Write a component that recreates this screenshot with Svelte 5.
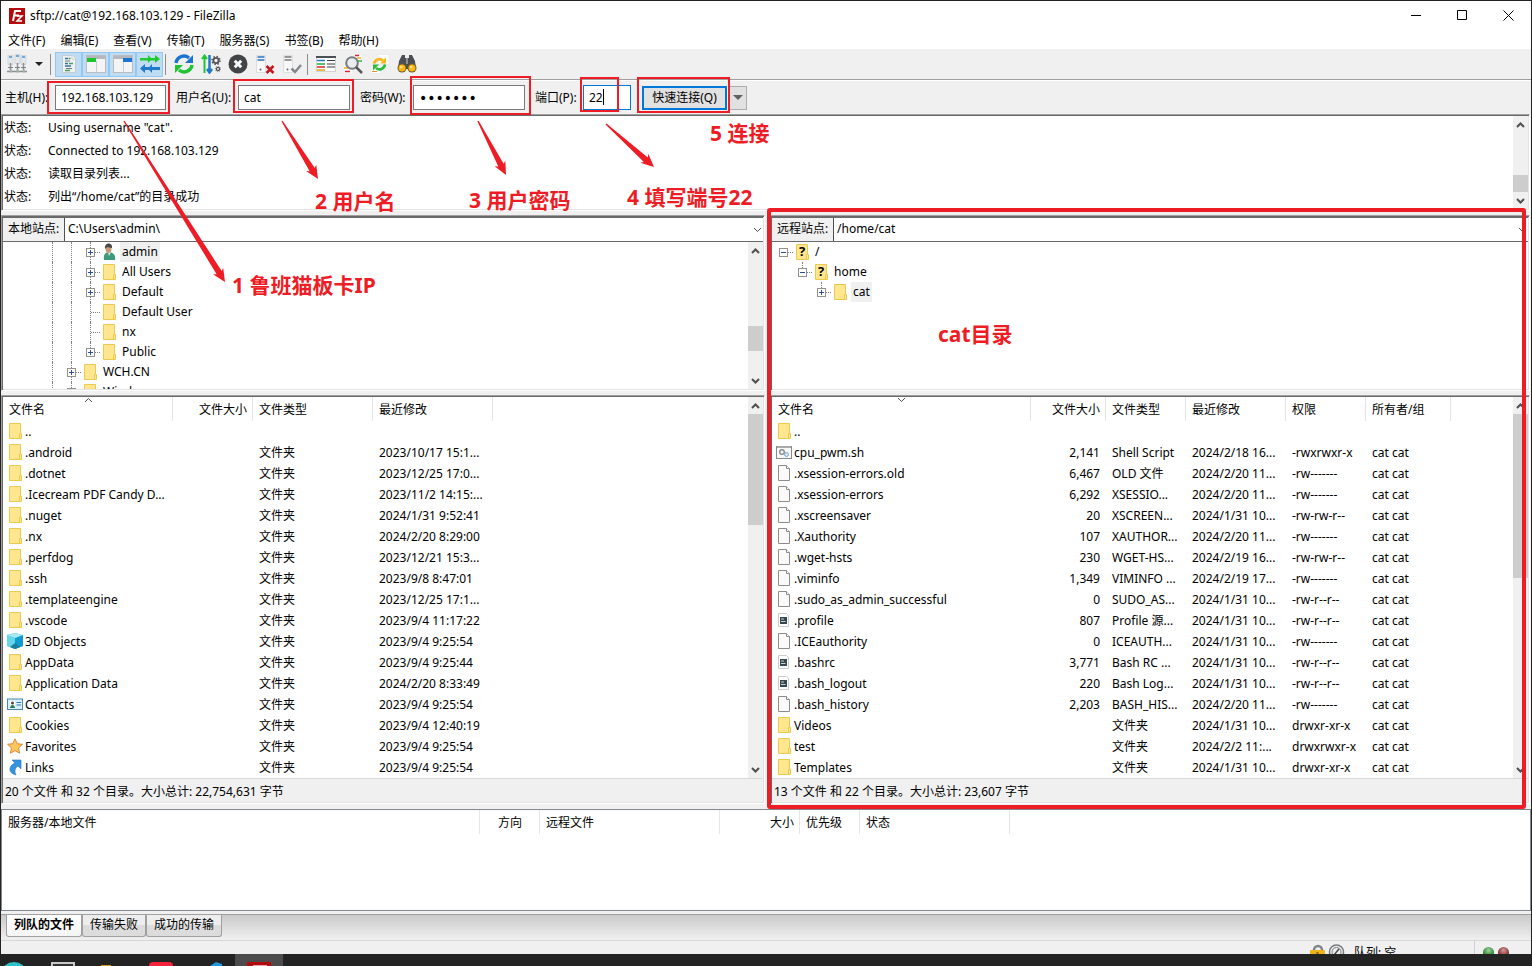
<script lang="ts">
	type Row = { icon: string; cells: string[] };

	const menus = ['文件(F)', '编辑(E)', '查看(V)', '传输(T)', '服务器(S)', '书签(B)', '帮助(H)'];

	const toggles = [
		{ icon: 'log', label: '消息日志' },
		{ icon: 'local', label: '本地目录树' },
		{ icon: 'remote', label: '远程目录树' },
		{ icon: 'queue', label: '传输队列' }
	];
	const actions = [
		{ icon: 'refresh', label: '刷新' },
		{ icon: 'process', label: '处理队列' },
		{ icon: 'cancel', label: '取消' },
		{ icon: 'disconnect', label: '断开连接' },
		{ icon: 'reconnect', label: '重新连接' }
	];
	const tools = [
		{ icon: 'filter', label: '过滤' },
		{ icon: 'compare', label: '比较' },
		{ icon: 'sync', label: '同步浏览' },
		{ icon: 'find', label: '搜索' }
	];

	const log = [
		'Using username "cat".',
		'Connected to 192.168.103.129',
		'读取目录列表...',
		'列出“/home/cat”的目录成功'
	];

	const localTree = [
		{ cells: ['', '', 'line', 'line', 'plus'], icon: 'user', name: 'admin', selected: true },
		{ cells: ['', '', 'line', 'line', 'plus'], icon: 'folder', name: 'All Users' },
		{ cells: ['', '', 'line', 'line', 'plus'], icon: 'folder', name: 'Default' },
		{ cells: ['', '', 'line', 'line', 'tee'], icon: 'folder', name: 'Default User' },
		{ cells: ['', '', 'line', 'line', 'tee'], icon: 'folder', name: 'nx' },
		{ cells: ['', '', 'line', 'line', 'plus last'], icon: 'folder', name: 'Public' },
		{ cells: ['', '', 'line', 'plus'], icon: 'folder', name: 'WCH.CN' },
		{ cells: ['', '', 'line', 'plus'], icon: 'folder', name: 'Windows' }
	];
	const remoteTree = [
		{ cells: ['minus root'], icon: 'unknown', name: '/' },
		{ cells: ['', 'minus last'], icon: 'unknown', name: 'home' },
		{ cells: ['', '', 'plus last'], icon: 'folder', name: 'cat', selected: true }
	];

	const dir = (name: string, date: string, icon = 'folder'): Row => ({
		icon,
		cells: [name, '', '文件夹', date]
	});
	const remote = (icon: string, name: string, size: string, type: string, date: string, perm: string): Row => ({
		icon,
		cells: [name, size, type, date, perm, 'cat cat']
	});

	const localCols = [
		{ name: '文件名', width: 170, sort: 'up' },
		{ name: '文件大小', width: 80, right: true },
		{ name: '文件类型', width: 120 },
		{ name: '最近修改', width: 120 }
	];
	const localRows = [
		{ icon: 'folder', cells: ['..', '', '', ''] },
		dir('.android', '2023/10/17 15:1...'),
		dir('.dotnet', '2023/12/25 17:0...'),
		dir('.Icecream PDF Candy D...', '2023/11/2 14:15:...'),
		dir('.nuget', '2024/1/31 9:52:41'),
		dir('.nx', '2024/2/20 8:29:00'),
		dir('.perfdog', '2023/12/21 15:3...'),
		dir('.ssh', '2023/9/8 8:47:01'),
		dir('.templateengine', '2023/12/25 17:1...'),
		dir('.vscode', '2023/9/4 11:17:22'),
		dir('3D Objects', '2023/9/4 9:25:54', 'cube'),
		dir('AppData', '2023/9/4 9:25:44'),
		dir('Application Data', '2024/2/20 8:33:49'),
		dir('Contacts', '2023/9/4 9:25:54', 'contact'),
		dir('Cookies', '2023/9/4 12:40:19'),
		dir('Favorites', '2023/9/4 9:25:54', 'star'),
		dir('Links', '2023/9/4 9:25:54', 'link')
	];

	const remoteCols = [
		{ name: '文件名', width: 259, sort: 'down' },
		{ name: '文件大小', width: 75, right: true },
		{ name: '文件类型', width: 80 },
		{ name: '最近修改', width: 100 },
		{ name: '权限', width: 80 },
		{ name: '所有者/组', width: 85 }
	];
	const remoteRows = [
		{ icon: 'folder', cells: ['..', '', '', '', '', ''] },
		remote('script', 'cpu_pwm.sh', '2,141', 'Shell Script', '2024/2/18 16...', '-rwxrwxr-x'),
		remote('file', '.xsession-errors.old', '6,467', 'OLD 文件', '2024/2/20 11...', '-rw-------'),
		remote('file', '.xsession-errors', '6,292', 'XSESSIO...', '2024/2/20 11...', '-rw-------'),
		remote('file', '.xscreensaver', '20', 'XSCREEN...', '2024/1/31 10...', '-rw-rw-r--'),
		remote('file', '.Xauthority', '107', 'XAUTHOR...', '2024/2/20 11...', '-rw-------'),
		remote('file', '.wget-hsts', '230', 'WGET-HS...', '2024/2/19 16...', '-rw-rw-r--'),
		remote('file', '.viminfo', '1,349', 'VIMINFO ...', '2024/2/19 17...', '-rw-------'),
		remote('file', '.sudo_as_admin_successful', '0', 'SUDO_AS...', '2024/1/31 10...', '-rw-r--r--'),
		remote('source', '.profile', '807', 'Profile 源...', '2024/1/31 10...', '-rw-r--r--'),
		remote('file', '.ICEauthority', '0', 'ICEAUTH...', '2024/1/31 10...', '-rw-------'),
		remote('source', '.bashrc', '3,771', 'Bash RC ...', '2024/1/31 10...', '-rw-r--r--'),
		remote('source', '.bash_logout', '220', 'Bash Log...', '2024/1/31 10...', '-rw-r--r--'),
		remote('file', '.bash_history', '2,203', 'BASH_HIS...', '2024/2/20 11...', '-rw-------'),
		remote('folder', 'Videos', '', '文件夹', '2024/1/31 10...', 'drwxr-xr-x'),
		remote('folder', 'test', '', '文件夹', '2024/2/2 11:...', 'drwxrwxr-x'),
		remote('folder', 'Templates', '', '文件夹', '2024/1/31 10...', 'drwxr-xr-x')
	];

	const queueCols = [
		{ name: '服务器/本地文件', width: 478 },
		{ name: '方向', width: 60, center: true },
		{ name: '远程文件', width: 180 },
		{ name: '大小', width: 80, right: true },
		{ name: '优先级', width: 60 },
		{ name: '状态', width: 150 }
	];

	const tabs = ['列队的文件', '传输失败', '成功的传输'];
	let activeTab = $state(0);

	let host = $state('192.168.103.129');
	let user = $state('cat');
	let password = $state('1234567');
	let port = $state('22');

	const boxes = [
		[48, 82, 121, 31],
		[234, 80, 119, 32],
		[411, 77, 119, 37],
		[581, 78, 37, 33],
		[638, 78, 91, 34]
	];
	const arrows = [
		[124, 121, 225, 282],
		[282, 121, 318, 179],
		[478, 121, 506, 175],
		[606, 124, 654, 167]
	];
	const notes = [
		{ x: 232, y: 293, text: '1 鲁班猫板卡IP' },
		{ x: 315, y: 209, text: '2 用户名' },
		{ x: 469, y: 208, text: '3 用户密码' },
		{ x: 627, y: 205, text: '4 填写端号22' },
		{ x: 710, y: 141, text: '5 连接' },
		{ x: 938, y: 342, text: 'cat目录' }
	];

	// thin tail that widens towards a barbed head
	function arrowPoints([x1, y1, x2, y2]: number[]) {
		const len = Math.hypot(x2 - x1, y2 - y1);
		const ux = (x2 - x1) / len;
		const uy = (y2 - y1) / len;
		const at = (along: number, side: number) =>
			`${x1 + ux * along - uy * side},${y1 + uy * along + ux * side}`;
		return [
			at(0, -0.7),
			at(len - 11, -3),
			at(len - 13, -6),
			at(len, 0),
			at(len - 13, 6),
			at(len - 11, 3),
			at(0, 0.7)
		].join(' ');
	}
</script>

{#snippet toolIcon(name: string)}
	<svg class="tool-icon" viewBox="0 0 20 20" aria-hidden="true">
		{#if name === 'site'}
			<path d="M1 1.500h5v9H1zM8 .5h5v9H8zM14 1.500h5v9h-5z" fill="#e4e8ec" stroke="#c3c9cf" stroke-width=".6" />
			<path d="M2 2h3v2H2zM9 1h3v2H9zM15 2h3v2h-3z" fill="#6ea9e0" />
			<path d="M3.500 9v8M10.500 9v8M16.500 9v8M0 17.500h20" stroke="#8b9196" stroke-width="1.500" />
			<path d="M1 13.500h5M8 13.500h5M14 13.500h5" stroke="#7c8389" />
			<path d="M3 15.500h2v3H3zM9.500 15.500h2v3h-2zM16 15.500h2v3h-2z" fill="#9db59a" />
		{:else if name === 'log'}
			<path d="M3.500 1.500h10l3 3v14h-13z" fill="#eef1f4" stroke="#c5cdd4" />
			<path d="M13 1.500v3.500h3.500" fill="#fff" stroke="#c5cdd4" />
			<path d="M6 4.500h3M6 9.500h3M6 12h6" stroke="#3d6f9e" stroke-width="1.500" />
			<path d="M9.500 4.500h2M10 9.500h4M6 16.500h5" stroke="#49a05b" stroke-width="1.500" />
			<path d="M6 7h5M7 14.500h6" stroke="#707980" />
		{:else if name === 'local' || name === 'remote'}
			<rect x=".5" y="1.500" width="19" height="17" fill="#f4f4f4" stroke="#b9bdc1" />
			<rect x="1" y="2" width="18" height="3" fill="#b4b8bc" />
			<path d="M10.500 7v11" stroke="#c9cdd0" />
			{#if name === 'local'}
				<path d="M1 4h9v4H1z" fill="#1cc52b" />
			{:else}
				<path d="M10 4h9v4h-9z" fill="#1d74d0" />
			{/if}
		{:else if name === 'queue'}
			<path d="M0 4h8V1l4 4-4 4V6.500H0zM10 4h5V1l5 4-5 4V6.500h-5z" fill="#1fc92f" />
			<path d="M20 13h-8v-3l-4 4.500 4 4.500v-3h8zM9 13H5v-3l-5 4.500L5 19v-3h4z" fill="#2279cc" />
		{:else if name === 'refresh'}
			<path d="M2 9A8 8 0 0 1 15 4" fill="none" stroke="#1d74d0" stroke-width="3.500" />
			<path d="M19 1v8h-8z" fill="#1d74d0" />
			<path d="M18 11A8 8 0 0 1 5 16" fill="none" stroke="#1fc333" stroke-width="3.500" />
			<path d="M1 19v-8h8z" fill="#1fc333" />
		{:else if name === 'process'}
			<path d="M3.500 2v17M1 5l2.500-3.500L6 5" fill="none" stroke="#20c534" stroke-width="2" />
			<path d="M8.500 1v17M6 15l2.500 3.500L11 15" fill="none" stroke="#2279cc" stroke-width="2.500" />
			<circle cx="15" cy="6.500" r="2.600" fill="none" stroke="#555" stroke-width="1.800" />
			<circle cx="15" cy="6.500" r="4" fill="none" stroke="#555" stroke-dasharray="1.500 1.640" stroke-width="1.500" />
			<circle cx="17" cy="15" r="1.600" fill="none" stroke="#555" stroke-width="1.300" />
			<circle cx="17" cy="15" r="2.700" fill="none" stroke="#777" stroke-dasharray="1 1.120" />
		{:else if name === 'cancel'}
			<circle cx="10" cy="10" r="9.500" fill="#424548" />
			<path d="M6.800 6.800l6.400 6.400M13.200 6.800l-6.400 6.400" stroke="#fff" stroke-width="3" />
		{:else if name === 'disconnect' || name === 'reconnect'}
			<path d="M1.500 1.500h9v17h-9z" fill="#f8f8f8" stroke="#dcdfe2" />
			<path d="M2.500 3h7M2.500 6h7" stroke={name === 'disconnect' ? '#2b72b8' : '#777'} stroke-width="1.500" />
			<circle cx="5.500" cy="15.500" r="1" fill="#666" />
			{#if name === 'disconnect'}
				<path d="M11.500 12l7 7M18.500 12l-7 7" stroke="#c4161f" stroke-width="2.500" />
			{:else}
				<path d="M9.500 14.500l3.500 3.500 6-7" fill="none" stroke="#85888a" stroke-width="2.500" />
			{/if}
		{:else if name === 'filter'}
			<rect x=".5" y="2.500" width="19" height="15" fill="#fff" stroke="#d2d2d2" />
			<path d="M0 3h20" stroke="#4b5054" stroke-width="2" />
			<path d="M1 6.500h8" stroke="#2279cc" stroke-width="1.500" />
			<path d="M1 10h8" stroke="#22ad38" stroke-width="1.500" />
			<path d="M1 13h8" stroke="#d9252b" stroke-width="1.500" />
			<path d="M1 16h8" stroke="#e0a512" stroke-width="1.500" />
			<path d="M11 6.500h8M11 10h8M11 13h8" stroke="#3b3e41" />
		{:else if name === 'compare'}
			<path d="M11 1h7v7h-7zM1 11h8v8H1z" fill="#fff" />
			<path d="M12 1.500h4M2 17.500h5" stroke="#d9252b" stroke-width="1.500" />
			<path d="M14 4h4M1 14h4" stroke="#f0ae20" stroke-width="1.500" />
			<path d="M15 7h4" stroke="#27b543" stroke-width="1.500" />
			<circle cx="9" cy="9" r="5.800" fill="#e8edf0" stroke="#777b7e" stroke-width="2" />
			<path d="M13 13l6 6" stroke="#56595c" stroke-width="2.500" />
		{:else if name === 'sync'}
			<path d="M8 .5h11v10H8zM.5 12h10v7.500H.5z" fill="#fff" stroke="#e2e2e2" stroke-width=".6" />
			<path d="M4 9.500a5.500 5.500 0 0 1 9-3" fill="none" stroke="#f6b613" stroke-width="2.600" />
			<path d="M16 3.500v6h-6z" fill="#f6b613" />
			<path d="M15 10.500a5.500 5.500 0 0 1-9 3.500" fill="none" stroke="#2cbc3c" stroke-width="2.600" />
			<path d="M3 16.500v-6h6z" fill="#2cbc3c" />
			<path d="M2 17.500h5" stroke="#e39a1e" />
		{:else}
			<path d="M5 1h3v3h4V1h3l3 6 1 8H1l1-8z" fill="#4b4f53" />
			<path d="M9 4h2v6H9z" fill="#8c9093" />
			<circle cx="5" cy="14" r="4.500" fill="#6a5a2a" />
			<circle cx="15" cy="14" r="4.500" fill="#6a5a2a" />
			<circle cx="5" cy="14" r="3.500" fill="#fbb613" />
			<circle cx="15" cy="14" r="3.500" fill="#fbb613" />
			<circle cx="4.300" cy="13" r="1.300" fill="#ffe38a" />
			<circle cx="14.300" cy="13" r="1.300" fill="#ffe38a" />
		{/if}
	</svg>
{/snippet}

{#snippet fileIcon(name: string)}
	<svg class="file-icon" viewBox="0 0 16 16" aria-hidden="true">
		{#if name === 'folder' || name === 'unknown'}
			<path d="M2.500.5h11v10h1v5h-12z" fill="#ffe68f" stroke="#ecc94f" />
			<path d="M12.500 15V10.500h1" fill="none" stroke="#ecc94f" />
			{#if name === 'unknown'}
				<text x="8" y="12" text-anchor="middle" font-size="13" font-weight="700">?</text>
			{/if}
		{:else if name === 'file'}
			<path d="M2.500.5h8l3 3v12h-11z" fill="#fafafa" stroke="#8c8c8c" />
			<path d="M10.500.5v3h3" fill="#fff" stroke="#8c8c8c" />
		{:else if name === 'source'}
			<path d="M2.500 1.500h8l2 2v11h-10z" fill="#fff" stroke="#c9cdd0" />
			<rect x="4" y="5" width="7" height="7" fill="#36474f" />
			<path d="M5 7h3M5 9.500h4.500" stroke="#c9d2d6" />
		{:else if name === 'script'}
			<rect x=".5" y="2.500" width="15" height="12" fill="#f8f8f8" stroke="#85898c" />
			<path d="M1 3h14" stroke="#a7abae" stroke-width="2" />
			<circle cx="6" cy="8" r="2.300" fill="none" stroke="#8a8f93" stroke-width="1.500" />
			<circle cx="10.500" cy="10.500" r="2" fill="#cfe4f5" stroke="#7fa9c9" />
		{:else if name === 'cube'}
			<path d="M8 0l8 2v11l-8 3-8-3V2z" fill="#35bcd8" />
			<path d="M0 2l8 3v11l-8-3z" fill="#63d5e8" />
			<path d="M8 5l8-3v11l-8 3z" fill="#0f9bd0" />
			<path d="M0 2l8-2 8 2-8 3z" fill="#a5e9f3" />
			<path d="M3 14l5-4 5 4-5 2z" fill="#1a7f9c" />
		{:else if name === 'contact'}
			<rect x=".5" y="3" width="15" height="10.500" fill="#d9effb" stroke="#4a86ad" />
			<path d="M3 5h5v7H3z" fill="#fff" />
			<circle cx="5.500" cy="7" r="1.500" fill="#584334" />
			<path d="M3 12c0-4 5-4 5 0z" fill="#2e7c63" />
			<path d="M9.500 6.500h4.500M9.500 9h4.500" stroke="#3179b5" />
		{:else if name === 'star'}
			<path
				d="M8 .8l2.200 4.900 5.300.6-3.900 3.600 1 5.300L8 12.600l-4.600 2.600 1-5.300L.5 6.300l5.300-.6z"
				fill="#fdc65b"
				stroke="#e08a3c"
			/>
		{:else if name === 'link'}
			<path d="M5 1h9v9l-3-3c-3 2-4 5-2 9-8-2-8-9-1-12z" fill="#3593e0" stroke="#2774bd" stroke-width=".6" />
		{:else}
			<path d="M3 16c-1-6 2-8 5-8s7 2 6 8z" fill="#3d9b7b" />
			<path d="M7 8l1 4 2-4z" fill="#e8f1ee" />
			<ellipse cx="7.500" cy="5" rx="3" ry="4" fill="#c49a7a" />
			<path d="M4 5c-1-7 8-7 7-1-2 0-4-1-5-1z" fill="#4d4a47" />
		{/if}
	</svg>
{/snippet}

{#snippet chevron(dir: string)}
	<svg class="chevron" viewBox="0 0 9 6" aria-hidden="true">
		<path d={dir === 'up' ? 'M1 5l3.500-3.500L8 5' : 'M1 1l3.500 3.500L8 1'} />
	</svg>
{/snippet}

{#snippet scrollbar(before: number, thumb: number, after: number)}
	<div class="scrollbar">
		<button aria-label="向上滚动">{@render chevron('up')}</button>
		<div style="flex-grow: {before}"></div>
		<div class="thumb" style="flex-grow: {thumb}"></div>
		<div style="flex-grow: {after}"></div>
		<button aria-label="向下滚动">{@render chevron('down')}</button>
	</div>
{/snippet}

{#snippet headings(cols: any[])}
	<thead>
		<tr>
			{#each cols as col}
				<th class:right={col.right} class:center={col.center} style="width: {col.width}px">
					{col.name}
					{#if col.sort}<span class="sort">{@render chevron(col.sort)}</span>{/if}
				</th>
			{/each}
			<th class="rest" aria-hidden="true"></th>
		</tr>
	</thead>
{/snippet}

{#snippet site(id: string, label: string, path: string, tree: any[], bar: number[] | null, cols: any[], rows: Row[], listBar: number[], total: string)}
	<section class="site">
		<div class="sunken top">
			<div class="path">
				<label for={id}>{label}</label>
				<select {id}>
					<option>{path}</option>
				</select>
				{@render chevron('down')}
			</div>
			<div class="scroll-area">
				<ul class="tree">
					{#each tree as node}
						<li>
							{#each node.cells as cell}
								<span class="cell {cell}">
									{#if cell.startsWith('plus') || cell.startsWith('minus')}
										<svg viewBox="0 0 9 9" aria-hidden="true">
											<rect x=".5" y=".5" width="8" height="8" />
											<path d={cell.startsWith('plus') ? 'M2 4.500h5M4.500 2v5' : 'M2 4.500h5'} />
										</svg>
									{/if}
								</span>
							{/each}
							<span class="node-icon">{@render fileIcon(node.icon)}</span>
							<span class="node-name" class:selected={node.selected}>{node.name}</span>
						</li>
					{/each}
				</ul>
				{#if bar}{@render scrollbar(bar[0], bar[1], bar[2])}{/if}
			</div>
		</div>
		<div class="sunken list">
			<div class="scroll-area">
				<div class="files">
					<table>
						{@render headings(cols)}
						<tbody>
							{#each rows as row}
								<tr>
									{#each row.cells as cell, i}
										{#if i === 0}
											<td class="name"><span>{@render fileIcon(row.icon)}{cell}</span></td>
										{:else}
											<td class:right={cols[i].right}>{cell}</td>
										{/if}
									{/each}
									<td></td>
								</tr>
							{/each}
						</tbody>
					</table>
				</div>
				{@render scrollbar(listBar[0], listBar[1], listBar[2])}
			</div>
			<p class="total">{total}</p>
		</div>
	</section>
{/snippet}

<div class="desktop">
	<main class="window">
		<header class="titlebar">
			<svg class="logo" viewBox="0 0 16 16" aria-hidden="true">
				<rect width="16" height="16" fill="#b30b0b" />
				<path d="M4 13L6 3h6M5 7.500h5" fill="none" stroke="#fff" stroke-width="2" />
				<path d="M8 8h5l-5 5h5" fill="none" stroke="#fff" stroke-width="1.500" />
			</svg>
			<h1>sftp://cat@192.168.103.129 - FileZilla</h1>
			<div class="controls">
				<button aria-label="最小化"><svg viewBox="0 0 11 11"><path d="M0 5.500h10" /></svg></button>
				<button aria-label="最大化"><svg viewBox="0 0 11 11"><path d="M.5.5h9v9h-9z" /></svg></button>
				<button aria-label="关闭"><svg viewBox="0 0 11 11"><path d="M.5.5l10 10M10.500.5l-10 10" /></svg></button>
			</div>
		</header>

		<nav class="menubar">
			{#each menus as menu}
				<button>{menu}</button>
			{/each}
		</nav>

		<div class="toolbar">
			<button aria-label="站点管理器">{@render toolIcon('site')}</button>
			<button class="more" aria-label="站点列表"><i class="triangle"></i></button>
			<hr />
			{#each toggles as item}
				<button class="pressed" aria-pressed="true" aria-label={item.label}>{@render toolIcon(item.icon)}</button>
			{/each}
			<hr />
			{#each actions as item}
				<button aria-label={item.label}>{@render toolIcon(item.icon)}</button>
			{/each}
			<hr />
			{#each tools as item}
				<button aria-label={item.label}>{@render toolIcon(item.icon)}</button>
			{/each}
		</div>

		<form class="quickconnect" onsubmit={(e) => e.preventDefault()}>
			<label for="host">主机(H):</label>
			<input id="host" type="text" bind:value={host} />
			<label for="user">用户名(U):</label>
			<input id="user" type="text" bind:value={user} />
			<label for="password">密码(W):</label>
			<input id="password" type="password" bind:value={password} />
			<label for="port">端口(P):</label>
			<span class="port">
				<input id="port" type="text" bind:value={port} />
				<i class="caret"></i>
			</span>
			<button class="connect">快速连接(Q)</button>
			<button type="button" class="history" aria-label="历史记录"><i class="triangle"></i></button>
		</form>

		<div class="sunken log">
			<div class="scroll-area">
				<dl>
					{#each log as line}
						<div>
							<dt>状态:</dt>
							<dd>{line}</dd>
						</div>
					{/each}
				</dl>
				{@render scrollbar(42, 17, 0)}
			</div>
		</div>

		<div class="sites">
			{@render site('local-path', '本地站点:', 'C:\\Users\\admin\\', localTree, [67, 25, 21], localCols, localRows, [0, 111, 236], '20 个文件 和 32 个目录。大小总计: 22,754,631 字节')}
			{@render site('remote-path', '远程站点:', '/home/cat', remoteTree, null, remoteCols, remoteRows, [0, 164, 183], '13 个文件 和 22 个目录。大小总计: 23,607 字节')}
		</div>

		<div class="transfers">
			<table>
				{@render headings(queueCols)}
			</table>
		</div>

		<div class="tabs" role="tablist">
			{#each tabs as tab, i}
				<button role="tab" aria-selected={activeTab === i} class:active={activeTab === i} onclick={() => (activeTab = i)}>
					{tab}
				</button>
			{/each}
		</div>

		<footer class="statusbar">
			<svg class="status-icons" viewBox="0 0 36 18" aria-hidden="true">
				<path d="M4 8V6a4 4 0 0 1 8 0v2" fill="none" stroke="#808488" stroke-width="2.500" />
				<rect x="0" y="6" width="15" height="11" rx="1" fill="#efb21b" />
				<rect x="6.500" y="8" width="2" height="5" fill="#8b6510" />
				<circle cx="26.500" cy="8" r="7" fill="#eee" stroke="#777a7d" stroke-width="1.500" />
				<circle cx="26.500" cy="8" r="4.500" fill="none" stroke="#777a7d" />
				<path d="M24 11l5-6" stroke="#44474a" stroke-width="1.500" />
			</svg>
			<span class="queue-state">队列: 空</span>
			<span class="leds"><i class="led green"></i><i class="led red"></i></span>
		</footer>
	</main>

	<svg class="taskbar" viewBox="1 0 300 12" width="300" height="12" aria-hidden="true">
		<rect x="235" width="48" height="12" fill="#4c4c4c" />
		<ellipse cx="14" cy="18" rx="12" ry="10" fill="#2fc3c9" />
		<rect x="52" y="9" width="22" height="10" fill="#333" stroke="#c8c8c8" stroke-width="2" />
		<rect x="101" y="11" width="10" height="3" fill="#d59d20" />
		<rect x="149" y="8" width="24" height="10" rx="4" fill="#f5213b" />
		<path d="M210 12l6-4 6 2v2z" fill="#2196dc" />
		<rect x="247" y="8" width="24" height="6" fill="#b30b0b" />
		<path d="M253 11.500h14" stroke="#e9a5a5" />
	</svg>

	<svg class="annotations" aria-hidden="true">
		{#each boxes as [x, y, width, height]}
			<rect {x} {y} {width} {height} stroke-width="2" />
		{/each}
		<rect x="769" y="210" width="755" height="597" rx="1" stroke-width="4" />
		{#each arrows as arrow}
			<polygon points={arrowPoints(arrow)} />
		{/each}
		{#each notes as note}
			<text x={note.x} y={note.y}>{note.text}</text>
		{/each}
	</svg>
</div>

<style>
	:global(body) {
		background: #232323;
	}

	.desktop {
		position: relative;
		display: flex;
		flex-direction: column;
		height: 100vh;
		box-sizing: border-box;
		padding: 1px 1px 0;
		overflow: hidden;
		background: #232323;
		color: #000;
		font: 12px/20px 'Noto Sans', 'Noto Sans CJK SC', sans-serif;
	}

	.window {
		flex: 1;
		min-height: 0;
		display: flex;
		flex-direction: column;
		background: #f0f0f0;
	}

	button,
	input,
	select {
		box-sizing: border-box;
		margin: 0;
		padding: 0;
		border: 0;
		border-radius: 0;
		background: none;
		color: inherit;
		font: inherit;
	}

	svg {
		display: block;
		flex: none;
	}

	.titlebar {
		display: flex;
		align-items: center;
		height: 29px;
		padding-left: 8px;
		background: #fff;
	}

	.logo {
		width: 16px;
		height: 16px;
		margin-right: 5px;
	}

	h1 {
		flex: 1;
		margin: 0;
		font-size: 12px;
		font-weight: 400;
	}

	.controls {
		display: flex;
	}

	.controls button {
		display: flex;
		align-items: center;
		justify-content: center;
		width: 46px;
		height: 29px;
	}

	.controls svg {
		width: 11px;
		height: 11px;
		fill: none;
		stroke: #000;
	}

	.menubar {
		display: flex;
		gap: 15px;
		height: 19px;
		padding-left: 7px;
		background: #fff;
	}

	.menubar button {
		line-height: 22px;
		white-space: nowrap;
	}

	.toolbar {
		display: flex;
		align-items: center;
		height: 30px;
		padding-left: 2px;
		border-bottom: 1px solid #a0a0a0;
	}

	.toolbar button {
		display: flex;
		align-items: center;
		justify-content: center;
		width: 27px;
		height: 25px;
	}

	.toolbar .more {
		width: 18px;
	}

	.toolbar .pressed {
		border: 1px solid #90c8f6;
		background: #c0dcf3;
	}

	.toolbar hr {
		width: 1px;
		height: 21px;
		margin: 0 4px 0 2px;
		border: 0;
		background: #8c8c8c;
	}

	.tool-icon {
		width: 20px;
		height: 20px;
	}

	.triangle {
		border: 4px solid transparent;
		border-top-color: #222;
		border-bottom: 0;
	}

	.quickconnect {
		display: grid;
		grid-template-columns: 50px 111px 72px 112px 63px 112px 58px 48px 98px 18px;
		align-items: center;
		height: 33px;
		padding-left: 4px;
		border-top: 1px solid #fff;
	}

	.quickconnect label {
		padding-left: 10px;
		white-space: nowrap;
	}

	.quickconnect label:first-child {
		padding-left: 0;
	}

	.quickconnect input {
		display: block;
		width: 100%;
		height: 25px;
		padding: 0 5px;
		border: 1px solid #7a7a7a;
		background: #fff;
		outline: 0;
	}

	.quickconnect input[type='password'] {
		font: 14px/20px 'DejaVu Sans', sans-serif;
	}

	.port {
		position: relative;
	}

	.quickconnect .port input {
		border-color: #0078d7;
	}

	.caret {
		position: absolute;
		left: 20px;
		top: 4px;
		width: 1px;
		height: 16px;
		background: #000;
	}

	.quickconnect .connect {
		height: 24px;
		margin: 0 2px 0 11px;
		border: 2px solid #0078d7;
		background: #e1e1e1;
		white-space: nowrap;
	}

	.quickconnect .history {
		display: flex;
		align-items: center;
		justify-content: center;
		height: 24px;
		border: 1px solid #adadad;
		background: #e1e1e1;
	}

	.history .triangle {
		border-width: 5px 5px 0;
		border-top-color: #606060;
	}

	.sunken {
		display: flex;
		flex-direction: column;
		border: 1px solid #fff;
		border-top-color: #a0a0a0;
		border-left-color: #a0a0a0;
		background: #fff;
		box-shadow: inset 1px 1px #696969, inset -1px -1px #e3e3e3;
		box-sizing: border-box;
		padding: 1px;
	}

	.scroll-area {
		flex: 1;
		display: flex;
		min-height: 0;
	}

	.log {
		height: 97px;
		margin-right: 1px;
	}

	dl {
		flex: 1;
		margin: 0;
		padding-left: 1px;
	}

	dl div {
		display: flex;
		line-height: 23px;
	}

	dt {
		width: 44px;
	}

	dd {
		margin: 0;
	}

	.scrollbar {
		display: flex;
		flex-direction: column;
		width: 15px;
		background: #f0f0f0;
	}

	.scrollbar button {
		display: flex;
		align-items: center;
		justify-content: center;
		height: 17px;
	}

	.scrollbar div {
		flex-basis: 0;
	}

	.thumb {
		background: #cdcdcd;
	}

	.chevron {
		width: 9px;
		height: 6px;
		fill: none;
		stroke: #505050;
	}

	.scrollbar .chevron {
		stroke-width: 2;
	}

	.sites {
		flex: 1;
		min-height: 0;
		display: grid;
		grid-template-columns: 764fr 760fr;
		gap: 5px;
		margin: 4px 1px 5px 0;
	}

	.site {
		display: flex;
		flex-direction: column;
		gap: 4px;
		min-width: 0;
		min-height: 0;
	}

	.top {
		height: 176px;
	}

	.path {
		position: relative;
		display: flex;
		height: 25px;
		box-sizing: border-box;
		border-top: 1px solid #696969;
		border-bottom: 1px solid #696969;
	}

	.path label {
		width: 62px;
		box-sizing: border-box;
		padding-left: 5px;
		border-right: 1px solid #505050;
		background: #f0f0f0;
		line-height: 22px;
		white-space: nowrap;
	}

	.path select {
		flex: 1;
		padding: 0 0 1px 3px;
		appearance: none;
		background: #fff;
	}

	.path .chevron {
		position: absolute;
		right: 1px;
		top: 9px;
	}

	.tree {
		flex: 1;
		margin: 0;
		padding: 0 0 0 2px;
		list-style: none;
		overflow: hidden;
	}

	.tree li {
		display: flex;
		height: 20px;
	}

	.cell {
		position: relative;
		width: 19px;
	}

	.cell.line::before,
	.cell.tee::before,
	.cell.plus::before,
	.cell.last::before {
		content: '';
		position: absolute;
		left: 9px;
		top: 0;
		bottom: 0;
		border-left: 1px dotted #808080;
	}

	.cell.last::before {
		bottom: 10px;
	}

	.cell.tee::after,
	.cell.plus::after,
	.cell.minus::after {
		content: '';
		position: absolute;
		left: 10px;
		right: 0;
		top: 10px;
		border-top: 1px dotted #808080;
	}

	.cell svg {
		position: absolute;
		z-index: 1;
		left: 5px;
		top: 6px;
		width: 9px;
		height: 9px;
		fill: #fff;
		stroke: #919191;
	}

	.cell path {
		stroke: #2b4fa0;
	}

	.node-icon {
		width: 19px;
		padding: 2px 0 0 1px;
		box-sizing: border-box;
	}

	.node-name {
		margin-left: 1px;
		padding: 0 2px;
	}

	.selected {
		background: #f0f0f0;
	}

	.file-icon {
		width: 16px;
		height: 16px;
		overflow: visible;
	}

	.list {
		flex: 1;
		min-height: 0;
	}

	.files {
		flex: 1;
		min-width: 0;
		overflow: hidden;
	}

	table {
		width: 100%;
		table-layout: fixed;
		border-collapse: collapse;
	}

	th,
	td {
		height: 21px;
		padding: 0 6px;
		box-sizing: border-box;
		font-weight: 400;
		line-height: 21px;
		text-align: left;
		white-space: nowrap;
		overflow: visible;
	}

	th {
		position: relative;
		height: 24px;
		background: linear-gradient(#e5e5e5, #e5e5e5) right / 1px 100% no-repeat;
	}

	th.rest {
		background: none;
	}

	.right {
		text-align: right;
	}

	.center {
		text-align: center;
	}

	.sort {
		position: absolute;
		left: 0;
		right: 0;
		top: 0;
		display: flex;
		justify-content: center;
	}

	td.name {
		padding: 0 0 0 4px;
	}

	.name span {
		display: flex;
		align-items: center;
		gap: 2px;
	}

	.name .file-icon {
		margin-bottom: 1px;
	}

	.total {
		height: 23px;
		margin: 0;
		padding-left: 2px;
		border-top: 1px solid #d9d9d9;
		background: #f0f0f0;
		line-height: 25px;
	}

	.transfers {
		height: 102px;
		box-sizing: border-box;
		border: 1px solid #828790;
		background: #fff;
	}

	.tabs {
		display: flex;
		align-items: flex-start;
		height: 26px;
		margin-top: 3px;
		padding-left: 5px;
		box-sizing: border-box;
		border-top: 1px solid #a0a0a0;
		background: linear-gradient(#cacaca, #f0f0f0);
	}

	.tabs button {
		height: 22px;
		padding: 0 7px 2px;
		border: 1px solid #a0a0a0;
		border-top: 0;
		border-radius: 0 0 3px 3px;
		background: linear-gradient(#ededed 50%, #dcdcdc 50%);
		white-space: nowrap;
	}

	.tabs .active {
		background: linear-gradient(#fff, #f4f4f4);
		font-weight: 700;
	}

	.statusbar {
		display: flex;
		justify-content: flex-end;
		height: 13px;
		border-top: 1px solid #d7d7d7;
		overflow: hidden;
	}

	.status-icons {
		width: 36px;
		height: 18px;
		margin: 3px 8px 0 0;
	}

	.queue-state {
		width: 120px;
		line-height: 24px;
	}

	.leds {
		display: flex;
		gap: 4px;
		width: 57px;
		height: 24px;
		box-sizing: border-box;
		padding: 6px 0 0 8px;
		border-left: 1px solid #d0d0d0;
	}

	.led {
		width: 11px;
		height: 11px;
		border-radius: 50%;
	}

	.green {
		background: radial-gradient(circle at 50% 30%, #9fd49f, #1d7a1f 70%);
	}

	.red {
		background: radial-gradient(circle at 50% 30%, #d29c9c, #7d1d1f 70%);
	}

	.annotations {
		position: absolute;
		inset: 0;
		width: 100%;
		height: 100%;
		pointer-events: none;
		fill: none;
		stroke: #ee1c25;
	}

	.annotations polygon,
	.annotations text {
		fill: #ee1c25;
		stroke: none;
	}

	.annotations text {
		font-size: 21px;
		font-weight: 700;
	}
</style>
